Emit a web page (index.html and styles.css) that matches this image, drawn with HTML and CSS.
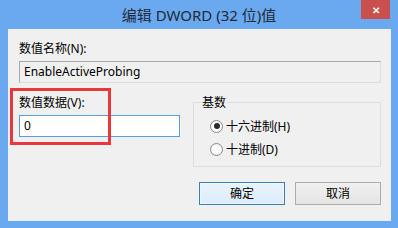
FILE: index.html
```html
<!DOCTYPE html>
<html lang="zh">
<head>
<meta charset="utf-8">
<title>编辑 DWORD (32 位)值</title>
<link rel="stylesheet" href="styles.css">
</head>
<body>
<div class="window">
  <div class="titlebar">
    <span></span>
    <span class="title">编辑 DWORD (32 位)值</span>
    <span class="close">&#x2715;</span>
  </div>
  <div class="client">
    <div class="label">数值名称(N):</div>
    <div class="textbox readonly">EnableActiveProbing</div>
    <div class="row">
      <div class="left">
        <div class="label">数值数据(V):</div>
        <div class="textbox focus">0</div>
        <div class="highlight"></div>
      </div>
      <div class="group">
        <span class="legend">基数</span>
        <div class="radios">
          <div class="radio-row"><span class="radio checked"></span><span>十六进制(H)</span></div>
          <div class="radio-row"><span class="radio"></span><span>十进制(D)</span></div>
        </div>
      </div>
    </div>
    <div class="buttons">
      <div class="btn default">确定</div>
      <div class="btn">取消</div>
    </div>
  </div>
</div>
</body>
</html>
```

FILE: styles.css
```css
* { box-sizing: border-box; }
html, body { margin: 0; padding: 0; }
body {
  width: 398px;
  height: 228px;
  overflow: hidden;
  font-family: "Noto Sans", "Noto Sans CJK SC", sans-serif;
  font-size: 12px;
  color: #000;
}
.window {
  width: 398px;
  height: 228px;
  background: #6aa8ef;
  padding: 0 7px 7px 8px;
  display: flex;
  flex-direction: column;
}
.titlebar {
  height: 29px;
  display: grid;
  grid-template-columns: 1fr auto 1fr;
  align-items: start;
  margin: 0 -7px 0 -8px;
}
.title {
  font-size: 15px;
  line-height: 20px;
  margin-top: 5px;
  color: #1f2b3a;
  font-family: "Noto Sans", "Noto Sans CJK SC", sans-serif;
}
.close {
  justify-self: end;
  margin-right: 8px;
  width: 29px;
  height: 19px;
  background: #c9504c;
  color: #fff;
  font-size: 10px;
  font-weight: bold;
  display: flex;
  align-items: center;
  justify-content: center;
}
.client {
  flex: 1;
  background: #f0f0f0;
  padding: 12px 10px 0 11px;
  border-bottom: 1px solid #e6eef8;
}
.label {
  line-height: 16px;
  height: 16px;
}
.textbox {
  margin-top: 4px;
  height: 22px;
  line-height: 20px;
  padding-left: 4px;
  border: 1px solid #abadb3;
}
.readonly {
  background: #f0f0f0;
  border-color: #a8a8a8 #dcdcdc #dcdcdc #a8a8a8;
}
.focus {
  background: #fff;
  border-color: #569de5;
}
.row {
  display: flex;
  align-items: flex-start;
}
.left {
  position: relative;
  width: 174px;
  padding-top: 12px;
}
.left .textbox { width: 161px; }
.highlight {
  position: absolute;
  left: -9px;
  top: 5px;
  width: 101px;
  height: 57px;
  border: 3px solid #e8383d;
}
.group {
  margin-top: 19px;
  width: 188px;
  height: 65px;
  border: 1px solid #dcdcdc;
  padding: 0 0 0 16px;
}
.legend {
  display: block;
  width: max-content;
  margin: -8px 0 0 -9px;
  padding: 0 1px;
  line-height: 16px;
  background: #f0f0f0;
}
.radios {
  padding-top: 4px;
  display: flex;
  flex-direction: column;
  gap: 1px;
}
.radio-row {
  height: 22px;
  display: flex;
  align-items: center;
  gap: 3px;
}
.radio {
  width: 13px;
  height: 13px;
  border-radius: 50%;
  border: 1px solid #8a8a8a;
  background: radial-gradient(circle, #ffffff 40%, #eaeaea 100%);
  display: flex;
  align-items: center;
  justify-content: center;
}
.radio.checked::after {
  content: "";
  width: 6px;
  height: 6px;
  border-radius: 50%;
  background: #2a2a2a;
}
.buttons {
  margin-top: 15px;
  display: flex;
  justify-content: flex-end;
  gap: 10px;
}
.btn {
  width: 86px;
  height: 23px;
  line-height: 21px;
  text-align: center;
  border: 1px solid #acacac;
  background: linear-gradient(#f0f0f0, #e5e5e5);
}
.btn.default {
  border-color: #3c7fb1;
  background: linear-gradient(#eaf3fb, #dcecfc);
  box-shadow: inset 0 0 0 1px #eef6fd;
}
```
